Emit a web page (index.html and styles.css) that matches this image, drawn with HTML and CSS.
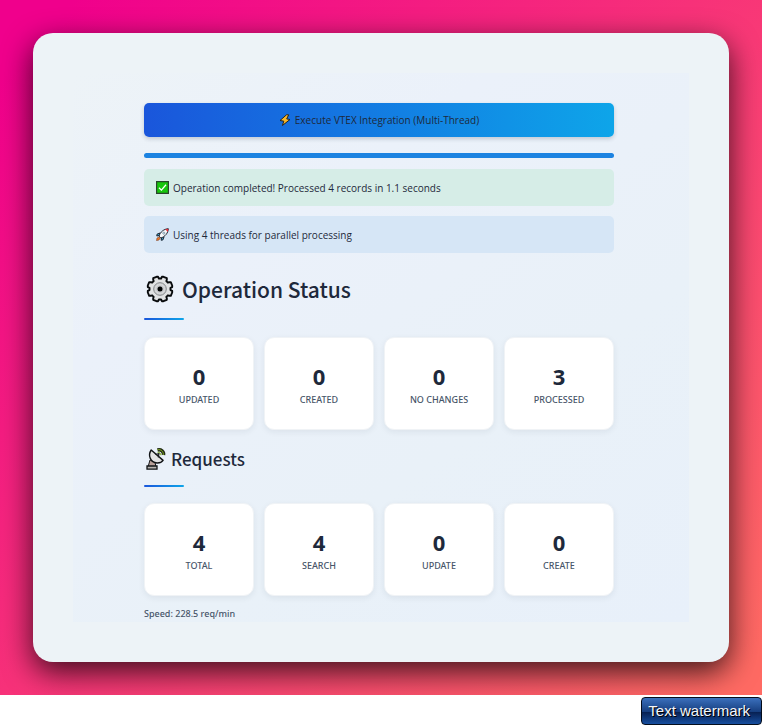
FILE: index.html
```html
<!DOCTYPE html>
<html lang="en">
<head>
<meta charset="utf-8">
<meta name="viewport" content="width=device-width, initial-scale=1">
<title>VTEX Integration</title>
<link rel="stylesheet" href="styles.css">
</head>
<body>
<div class="stage">
  <div class="frame">
    <main class="panel">
      <button class="run" type="button">
        <svg class="icon-bolt" viewBox="0 0 12 14" aria-hidden="true"><path d="M7.500 1.800 1 7.500l3.800.7-1.400 4.300L11 6.500 7.700 5.900 9.700 1.800z" fill="#fbb829" stroke="#27231c" stroke-linejoin="round"/></svg>
        Execute VTEX Integration (Multi-Thread)
      </button>
      <div class="progress" role="progressbar" aria-label="Progress" aria-valuenow="100"></div>
      <p class="notice success">
        <svg class="icon-small" viewBox="0 0 13 13" aria-hidden="true"><path d="M.6.6h11.800v11.800H.6z" fill="#16c60c" stroke="#29452b" stroke-width="1.200"/><path d="m3 6.800 2.400 2.300L10 3.800" fill="none" stroke="#fff" stroke-width="1.300"/></svg>
        Operation completed! Processed 4 records in 1.1 seconds
      </p>
      <p class="notice info">
        <svg class="icon-small" viewBox="0 0 13 13" aria-hidden="true"><path d="m4 5-3 1.200L.8 8l2.700-.6zM8 9l-1.200 3-1.700.2.600-2.800z" fill="#38a9dc" stroke="#1c2530" stroke-width="1"/><path d="M3 8.200C4.200 4 7.800 1 12.300.7 12.200 5 9 8.700 4.900 10z" fill="#f7f8fa" stroke="#1c2530" stroke-width="1"/><path d="M9.200 1.200 12.300.7l-.5 3.200z" fill="#e62b37"/><circle cx="7.800" cy="5.200" r="1.100" fill="#c9e9f8" stroke="#52606e" stroke-width=".5"/><path d="M3.200 9 1 10l-.5 2.600L3 12l1.100-2z" fill="#f37b24" stroke="#7b4029" stroke-width=".6"/></svg>
        Using 4 threads for parallel processing
      </p>

      <h2 class="heading">
        <svg class="icon-gear" viewBox="0 0 32 32" aria-hidden="true"><path d="M12.500 3.800h1.600l.8 1.700h2.200l.8-1.700h1.600l3.300 1.400v1.700l-.5 1.200 1.600 1.600 1.200-.5h1.700l1.400 3.300v1.600l-1.700.8v2.200l1.700.8v1.600l-1.400 3.300h-1.700l-1.200-.5-1.600 1.600.5 1.200v1.700l-3.300 1.400h-1.600l-.8-1.700h-2.200l-.8 1.700h-1.600l-3.300-1.400v-1.700l.5-1.200-1.600-1.600-1.200.5H5.200l-1.400-3.300v-1.600l1.700-.8v-2.200l-1.700-.8v-1.600l1.400-3.300h1.700l1.200.5 1.600-1.600-.5-1.200V5.200z" fill="#e1e2e3" stroke="#080a0c" stroke-width="1.900" stroke-linejoin="round"/><circle cx="16" cy="16" r="6.300" fill="#d3d4d5" stroke="#85888b"/><circle cx="16" cy="16" r="4.300" fill="#c6c7c9" stroke="#d9dadd"/><circle cx="16" cy="16" r="2.500" fill="#020304"/></svg>
        Operation Status
      </h2>
      <section class="stats" aria-label="Operation Status">
        <div class="stat"><strong>0</strong><span>UPDATED</span></div>
        <div class="stat"><strong>0</strong><span>CREATED</span></div>
        <div class="stat"><strong>0</strong><span>NO CHANGES</span></div>
        <div class="stat"><strong>3</strong><span>PROCESSED</span></div>
      </section>

      <h3 class="heading heading-sub">
        <svg class="icon-dish" viewBox="0 0 23 26" aria-hidden="true"><path d="m6 14-2 7h8l-1-5z" fill="#b79f98" stroke="#181a1c"/><path d="M3 20h10v3.200H3z" fill="#b8b5b2" stroke="#111416" stroke-width="1.300"/><path d="M7.200 4C3.500 9.500 6.500 16.500 13 17c2.500.1 4.800-.8 6.100-2.600z" fill="#e2e2e3" stroke="#111416" stroke-width="1.400" stroke-linejoin="round"/><path d="m11.500 8.500 3.500-1-.7 3.900" fill="none" stroke="#17191b" stroke-width="1.200"/><path d="M13.500 4c3.500-1 6.500 1.500 6 5" fill="none" stroke="#242d16" stroke-width="3.600"/><path d="M13.500 3.700c3.400-.7 6 1.800 5.900 5.200M13.500 6.200c2-.1 3.300 1.200 3.400 3.100" fill="none" stroke="#82ad21"/></svg>
        Requests
      </h3>
      <section class="stats" aria-label="Requests">
        <div class="stat"><strong>4</strong><span>TOTAL</span></div>
        <div class="stat"><strong>4</strong><span>SEARCH</span></div>
        <div class="stat"><strong>0</strong><span>UPDATE</span></div>
        <div class="stat"><strong>0</strong><span>CREATE</span></div>
      </section>
      <p class="speed">Speed: 228.5 req/min</p>
    </main>
  </div>
</div>
<footer class="footer"><span class="watermark">Text watermark</span></footer>
</body>
</html>
```
FILE: styles.css
```css
* { box-sizing: border-box; }
body {
  margin: 0;
  background: #fff;
  color: #1e293b;
  font-family: "Noto Sans", "Open Sans", sans-serif;
}
.stage {
  overflow: hidden;
  padding: 33px;
  background: linear-gradient(135deg, #f0008c 5%, #ff6a63 97%);
}
.frame {
  padding: 40px;
  border-radius: 20px;
  background: #edf3f7;
  box-shadow: 0 10px 30px rgba(0, 0, 0, 0.75);
}
.panel {
  padding: 30px 75px 0 71px;
  background: linear-gradient(145deg, #edf3f7, #ebf1fa 30%, #e9f1f8 65%, #e8f0fa);
}
.run {
  display: flex;
  align-items: center;
  justify-content: center;
  gap: 4px;
  width: 100%;
  height: 34px;
  padding: 0;
  border: 0;
  border-radius: 5px;
  background: linear-gradient(90deg, #1a56db, #1280e3 55%, #0ea5e9);
  box-shadow: 0 2px 4px rgba(30, 41, 59, 0.2);
  color: #1e293b;
  font-family: "Open Sans", sans-serif;
  font-size: 10px;
  line-height: 16px;
}
.icon-bolt { width: 12px; height: 14px; }
.progress {
  height: 5px;
  margin: 16px 0 11px;
  border-radius: 3px;
  background: #1c83e1;
}
.notice {
  display: flex;
  align-items: center;
  gap: 4px;
  height: 37px;
  margin: 0 0 10px;
  padding: 0 12px;
  border-radius: 5px;
  font-family: "Open Sans", sans-serif;
  font-size: 10px;
  line-height: 16px;
}
.success { background: #d6ede7; }
.info { background: #d6e6f6; }
.icon-small { width: 13px; height: 13px; }
.heading {
  display: flex;
  align-items: center;
  flex-wrap: wrap;
  gap: 0 6px;
  margin: 0 0 17px;
  font-family: "Noto Sans CJK SC", sans-serif;
  font-size: 21px;
  font-weight: 500;
  line-height: 30px;
}
.heading::after {
  content: "";
  flex: 0 0 40px;
  height: 2px;
  margin: 13px calc(100% - 40px) 0 0;
  border-radius: 2px;
  background: linear-gradient(90deg, #1a56db, #0ea5e9);
}
.notice + .heading { margin-top: 20px; }
.icon-gear { width: 32px; height: 32px; }
.heading-sub {
  gap: 0 4px;
  margin: 16px 0;
  font-size: 17px;
  line-height: 26px;
}
.icon-dish { width: 23px; height: 26px; }
.stats {
  display: grid;
  grid-template-columns: repeat(4, 1fr);
  gap: 10px;
}
.stat {
  display: flex;
  flex-direction: column;
  align-items: center;
  padding: 23px 4px 21px;
  border: 1px solid #f0f3f6;
  border-radius: 10px;
  background: #fff;
  box-shadow: 0 2px 6px rgba(30, 41, 59, 0.07);
}
.stat strong { font-size: 22px; font-weight: 700; line-height: 30px; }
.stat span { color: #475569; font-size: 9px; font-weight: 500; line-height: 17px; }
.speed {
  margin: 0;
  padding: 10px 0 0;
  color: #475569;
  font-size: 9px;
  font-weight: 500;
  line-height: 16px;
}
.footer {
  display: flex;
  justify-content: flex-end;
  padding-top: 2px;
}
.watermark {
  padding: 0 11px 0 6px;
  border: 1px solid #050d1c;
  border-radius: 4px;
  background: linear-gradient(#3b70bd, #173f80 52%, #071f50 53%, #164e9f);
  color: #f4f6fa;
  font-family: "Liberation Sans", Arial, sans-serif;
  font-size: 15px;
  line-height: 26px;
  text-shadow: 1px 1px #000;
}
```
